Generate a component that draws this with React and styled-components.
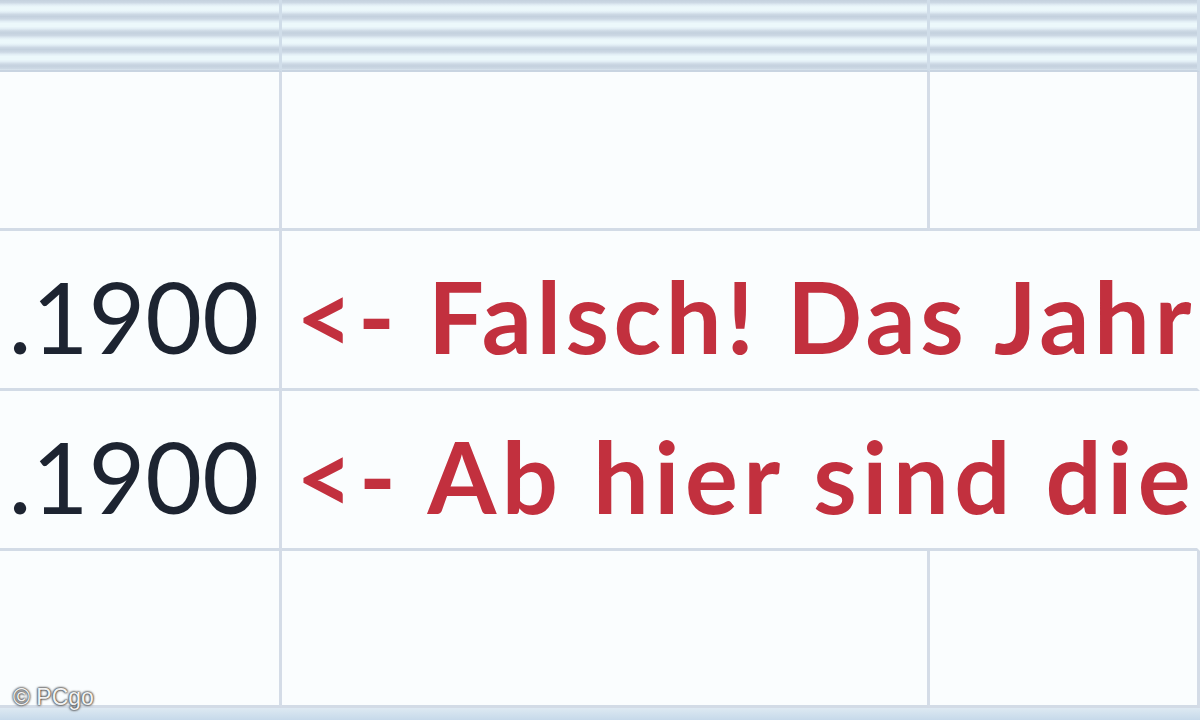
import React from 'react';
import styled, { createGlobalStyle } from 'styled-components';

const GlobalStyle = createGlobalStyle`
  html, body {
    margin: 0;
    padding: 0;
  }
  body {
    background: #f9fdfe;
    overflow: hidden;
  }
`;

const Frame = styled.div`
  position: relative;
  width: 1200px;
  height: 720px;
  overflow: hidden;
  background: #fafdfe;
`;

const Sheet = styled.div`
  display: grid;
  grid-template-columns: 282px 648px 1fr;
  grid-template-rows: 72px 159px 160px 160px 157px 12px;
  width: 100%;
  height: 100%;
  filter: blur(0.6px);
`;

const Cell = styled.div`
  grid-column: span ${(p) => p.$span || 1};
  border-right: 3px solid ${(p) => (p.$span > 1 ? 'transparent' : '#d4dce7')};
  border-bottom: 3px solid #d2dbe6;
  overflow: visible;
  white-space: nowrap;
`;

// the thin rows at the top, seen as stripes at this zoom
const StripeCell = styled(Cell)`
  border-bottom: 2px solid #c8d4e1;
  border-right-color: #d0dde9;
  background: repeating-linear-gradient(
    180deg,
    #c4d1de 0px,
    #ccd8e4 2.5px,
    #e2eef5 5px,
    #ecf8fb 7px,
    #ecf8fb 10px,
    #e2eef5 12px,
    #ccd8e4 14.5px,
    #c4d1de 16.5px
  );
`;

const DateCell = styled(Cell)`
  display: flex;
  justify-content: flex-end;
  align-items: flex-end;
  padding-right: 20px;
  padding-bottom: 23px;
  font-family: Lato, 'Liberation Sans', sans-serif;
  font-size: 98px;
  line-height: 1;
  color: #1d2431;
`;

const NoteCell = styled(Cell)`
  display: flex;
  align-items: flex-end;
  padding-left: 14px;
  padding-bottom: 23px;
  font-family: Lato, 'Liberation Sans', sans-serif;
  font-weight: 700;
  font-size: 99px;
  line-height: 1;
  letter-spacing: ${(p) => p.$spacing}px;
  color: #c2303e;
`;

const BottomBar = styled.div`
  grid-column: span 3;
  background: linear-gradient(180deg, #dde9f2 0%, #c6d9ea 100%);
`;

const Watermark = styled.div`
  position: absolute;
  left: 13px;
  bottom: 11px;
  font-family: 'Liberation Sans', Arial, sans-serif;
  font-size: 23px;
  line-height: 1;
  color: #f2f2f2;
  text-shadow: 0 0 2px #3f3f3f, 0 0 2px #3f3f3f, 0 0 3px #666;
`;

const rows = [
  { date: '.1900', note: '<- Falsch! Das Jahr', spacing: 4.5 },
  { date: '.1900', note: '<- Ab hier sind die', spacing: 5.5 },
];

const App = () => (
  <Frame>
    <GlobalStyle />
    <Sheet>
      <StripeCell />
      <StripeCell />
      <StripeCell />

      <Cell />
      <Cell />
      <Cell />

      {rows.map((row, i) => (
        <React.Fragment key={i}>
          <DateCell>{row.date}</DateCell>
          <NoteCell $span={2} $spacing={row.spacing}>
            {row.note}
          </NoteCell>
        </React.Fragment>
      ))}

      <Cell />
      <Cell />
      <Cell />

      <BottomBar />
    </Sheet>
    <Watermark>© PCgo</Watermark>
  </Frame>
);

export default App;
